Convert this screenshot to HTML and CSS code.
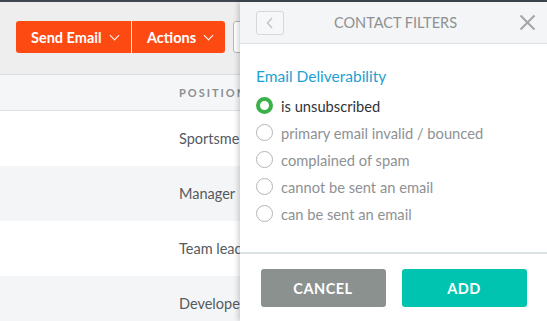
FILE: index.html
```html
<!DOCTYPE html>
<html lang="en">
<head>
    <meta charset="UTF-8">
    <title>Contacts</title>
    <link rel="stylesheet" href="styles.css">
</head>
<body>
    <div class="topline"></div>
    <div class="page">
        <div class="toolbar">
            <div class="btn-group">
                <button class="btn-orange">Send Email <span class="caret"></span></button>
                <button class="btn-orange">Actions <span class="caret"></span></button>
            </div>
            <button class="btn-plain"></button>
        </div>
        <div class="table">
            <div class="thead"><span class="col-pos">POSITION</span></div>
            <div class="row"><span class="col-pos">Sportsmen</span></div>
            <div class="row alt"><span class="col-pos">Manager</span></div>
            <div class="row"><span class="col-pos">Team lead</span></div>
            <div class="row alt"><span class="col-pos">Developer</span></div>
        </div>
    </div>

    <div class="panel">
        <div class="panel-header">
            <button class="back-btn">
                <svg width="10" height="12" viewBox="0 0 10 12"><path d="M7 1 L2.5 6 L7 11" fill="none" stroke="#c4c8cb" stroke-width="1.6"/></svg>
            </button>
            <div class="panel-title">CONTACT FILTERS</div>
            <div class="close-btn">
                <svg width="17" height="17" viewBox="0 0 17 17"><path d="M1.5 1.5 L15.5 15.5 M15.5 1.5 L1.5 15.5" stroke="#a3a6a8" stroke-width="2"/></svg>
            </div>
        </div>
        <div class="panel-body">
            <div class="group-title">Email Deliverability</div>
            <label class="option checked"><span class="radio"></span>is unsubscribed</label>
            <label class="option"><span class="radio"></span>primary email invalid / bounced</label>
            <label class="option"><span class="radio"></span>complained of spam</label>
            <label class="option"><span class="radio"></span>cannot be sent an email</label>
            <label class="option"><span class="radio"></span>can be sent an email</label>
        </div>
        <div class="panel-footer">
            <button class="btn-cancel">CANCEL</button>
            <button class="btn-add">ADD</button>
        </div>
    </div>
</body>
</html>
```
FILE: styles.css
```css
:root {
    --orange: #fd4a12;
    --teal: #00c4b0;
    --blue: #1ba1d3;
    --green: #3bb14a;
}

body {
    margin: 0;
    font-family: 'Lato', 'Liberation Sans', sans-serif;
    background: #fff;
    width: 547px;
    height: 321px;
    overflow: hidden;
    position: relative;
}
.topline {
    height: 2px;
    background: #3f4751;
}
.toolbar {
    height: 73px;
    background: #eeeeee;
    border-bottom: 1px solid #dcdcdc;
    display: flex;
    align-items: flex-start;
    padding: 19px 0 0 16px;
    box-sizing: border-box;
    gap: 8px;
}
.btn-group {
    display: flex;
    gap: 1px;
}
button {
    font-family: inherit;
    cursor: pointer;
}
.btn-orange {
    background: var(--orange);
    color: #fff;
    border: none;
    height: 32px;
    font-size: 14.5px;
    font-weight: 700;
    padding: 0 0 0 15px;
    display: flex;
    align-items: center;
    gap: 9px;
    white-space: nowrap;
}
.btn-group .btn-orange:first-child { border-radius: 3px 0 0 3px; width: 115px; }
.btn-group .btn-orange:last-child { border-radius: 0 3px 3px 0; width: 93px; }
.caret {
    width: 6px;
    height: 6px;
    border-right: 1px solid #fff;
    border-bottom: 1px solid #fff;
    transform: rotate(45deg);
    margin-top: -4px;
}
.btn-plain {
    width: 40px;
    height: 32px;
    background: #fff;
    border: 1px solid #b8b8b8;
    border-radius: 3px;
}
.thead {
    height: 36px;
    background: #f5f6f8;
    border-bottom: 1px solid #dedfe0;
    display: flex;
    align-items: center;
    font-size: 11px;
    font-weight: 700;
    letter-spacing: 2px;
    color: #8b8e90;
    box-sizing: border-box;
}
.col-pos {
    padding-left: 179px;
    white-space: nowrap;
}
.row {
    height: 55px;
    display: flex;
    align-items: center;
    font-size: 14.5px;
    color: #555a5e;
}
.row.alt { background: #f4f5f7; }

.panel {
    position: absolute;
    top: 2px;
    left: 240px;
    width: 307px;
    bottom: 0;
    background: #fff;
    box-shadow: -2px 0 5px rgba(0, 0, 0, 0.18);
    display: flex;
    flex-direction: column;
}
.panel-header {
    height: 42px;
    background: #f4f5f6;
    border-bottom: 1px solid #dde0e2;
    display: flex;
    align-items: center;
    padding: 0 11px 0 16px;
    box-sizing: border-box;
}
.back-btn {
    width: 28px;
    height: 24px;
    border: 1px solid #d6d9dc;
    border-radius: 3px;
    background: #f6f7f8;
    display: flex;
    align-items: center;
    justify-content: center;
    padding: 0;
}
.panel-title {
    flex: 1;
    text-align: center;
    font-size: 14.5px;
    color: #8d9194;
    padding-right: 12px;
}
.close-btn {
    width: 17px;
    height: 17px;
    display: flex;
}
.panel-body {
    padding: 23px 16px 0 16px;
    height: 210px;
    box-sizing: border-box;
    border-bottom: 2px solid #dbe2e5;
}
.group-title {
    font-size: 15.5px;
    color: var(--blue);
    margin-bottom: 7px;
}
.option {
    display: flex;
    align-items: center;
    gap: 8px;
    height: 27px;
    font-size: 14.7px;
    color: #8e9194;
}
.option.checked { color: #2f3438; }
.radio {
    width: 17px;
    height: 17px;
    border-radius: 50%;
    border: 1.5px solid #b3b5b7;
    box-sizing: border-box;
}
.option.checked .radio {
    border: 4px solid var(--green);
}
.panel-footer {
    display: flex;
    justify-content: center;
    gap: 16px;
    padding-top: 15px;
}
.panel-footer button {
    width: 125px;
    height: 38px;
    border: none;
    border-radius: 3px;
    color: #fff;
    font-size: 14.5px;
    font-weight: 700;
    letter-spacing: 0.5px;
}
.btn-cancel { background: #8a918f; }
.btn-add { background: var(--teal); }
```
